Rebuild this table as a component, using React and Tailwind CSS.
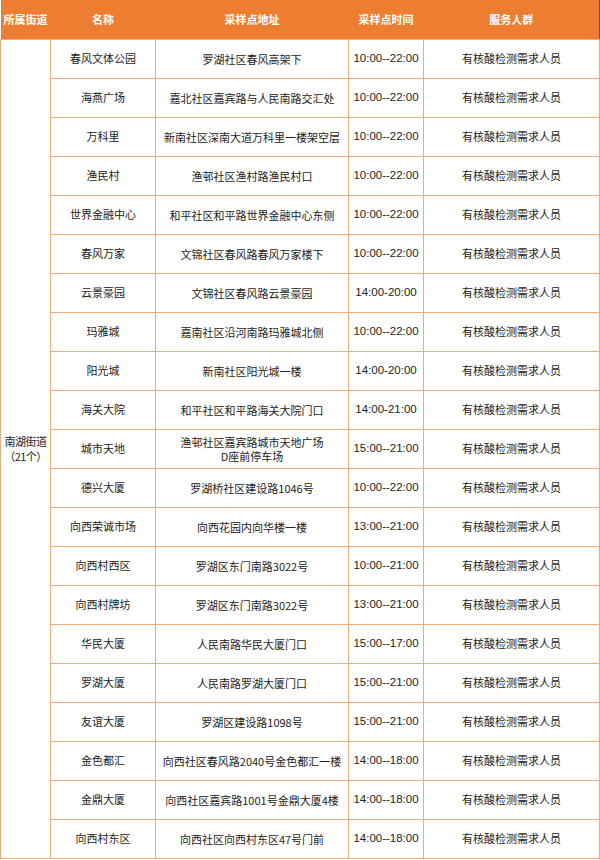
import React from "react";

const rows = [
  ["春风文体公园", "罗湖社区春风高架下", "10:00--22:00"],
  ["海燕广场", "嘉北社区嘉宾路与人民南路交汇处", "10:00--22:00"],
  ["万科里", "新南社区深南大道万科里一楼架空层", "10:00--22:00"],
  ["渔民村", "渔邨社区渔村路渔民村口", "10:00--22:00"],
  ["世界金融中心", "和平社区和平路世界金融中心东侧", "10:00--22:00"],
  ["春风万家", "文锦社区春风路春风万家楼下", "10:00--22:00"],
  ["云景豪园", "文锦社区春风路云景豪园", "14:00-20:00"],
  ["玛雅城", "嘉南社区沿河南路玛雅城北侧", "10:00--22:00"],
  ["阳光城", "新南社区阳光城一楼", "14:00-20:00"],
  ["海关大院", "和平社区和平路海关大院门口", "14:00-21:00"],
  ["城市天地", "渔邨社区嘉宾路城市天地广场\nD座前停车场", "15:00--21:00"],
  ["德兴大厦", "罗湖桥社区建设路1046号", "10:00--22:00"],
  ["向西荣诚市场", "向西花园内向华楼一楼", "13:00--21:00"],
  ["向西村西区", "罗湖区东门南路3022号", "10:00--21:00"],
  ["向西村牌坊", "罗湖区东门南路3022号", "13:00--21:00"],
  ["华民大厦", "人民南路华民大厦门口", "15:00--17:00"],
  ["罗湖大厦", "人民南路罗湖大厦门口", "15:00--21:00"],
  ["友谊大厦", "罗湖区建设路1098号", "15:00--21:00"],
  ["金色都汇", "向西社区春风路2040号金色都汇一楼", "14:00--18:00"],
  ["金鼎大厦", "向西社区嘉宾路1001号金鼎大厦4楼", "14:00--18:00"],
  ["向西村东区", "向西社区向西村东区47号门前", "14:00--18:00"],
];

const cell = "border border-[#f2ab7c] text-center align-middle p-0";

export default function App() {
  return (
    <div className="w-[600px] h-[860px] bg-white font-['Noto_Sans_CJK_SC','Noto_Sans',sans-serif] text-[11px] text-[#222]">
      <table className="table-fixed border-collapse w-[599px] border-r border-r-[#6b5a50]">
        <colgroup>
          <col className="w-[50px]" />
          <col className="w-[105px]" />
          <col className="w-[193px]" />
          <col className="w-[75px]" />
          <col className="w-[176px]" />
        </colgroup>
        <thead>
          <tr className="h-[39px] bg-[#ed7d31] text-white font-bold">
            <th className="p-0 text-center">所属街道</th>
            <th className="p-0 text-center">名称</th>
            <th className="p-0 text-center">采样点地址</th>
            <th className="p-0 text-center">采样点时间</th>
            <th className="p-0 text-center">服务人群</th>
          </tr>
        </thead>
        <tbody>
          {rows.map((r, i) => (
            <tr key={i} className="h-[39px]">
              {i === 0 && (
                <td rowSpan={21} className={cell + " leading-[15px] tracking-[-0.5px]"}>
                  <div>南湖街道</div>
                  <div>（21个）</div>
                </td>
              )}
              <td className={cell}>{r[0]}</td>
              <td className={cell + " whitespace-pre-line leading-[14px]"}>{r[1]}</td>
              <td className={cell + " font-['Liberation_Sans',sans-serif] text-[11.5px]"}>{r[2]}</td>
              <td className={cell}>有核酸检测需求人员</td>
            </tr>
          ))}
        </tbody>
      </table>
    </div>
  );
}
